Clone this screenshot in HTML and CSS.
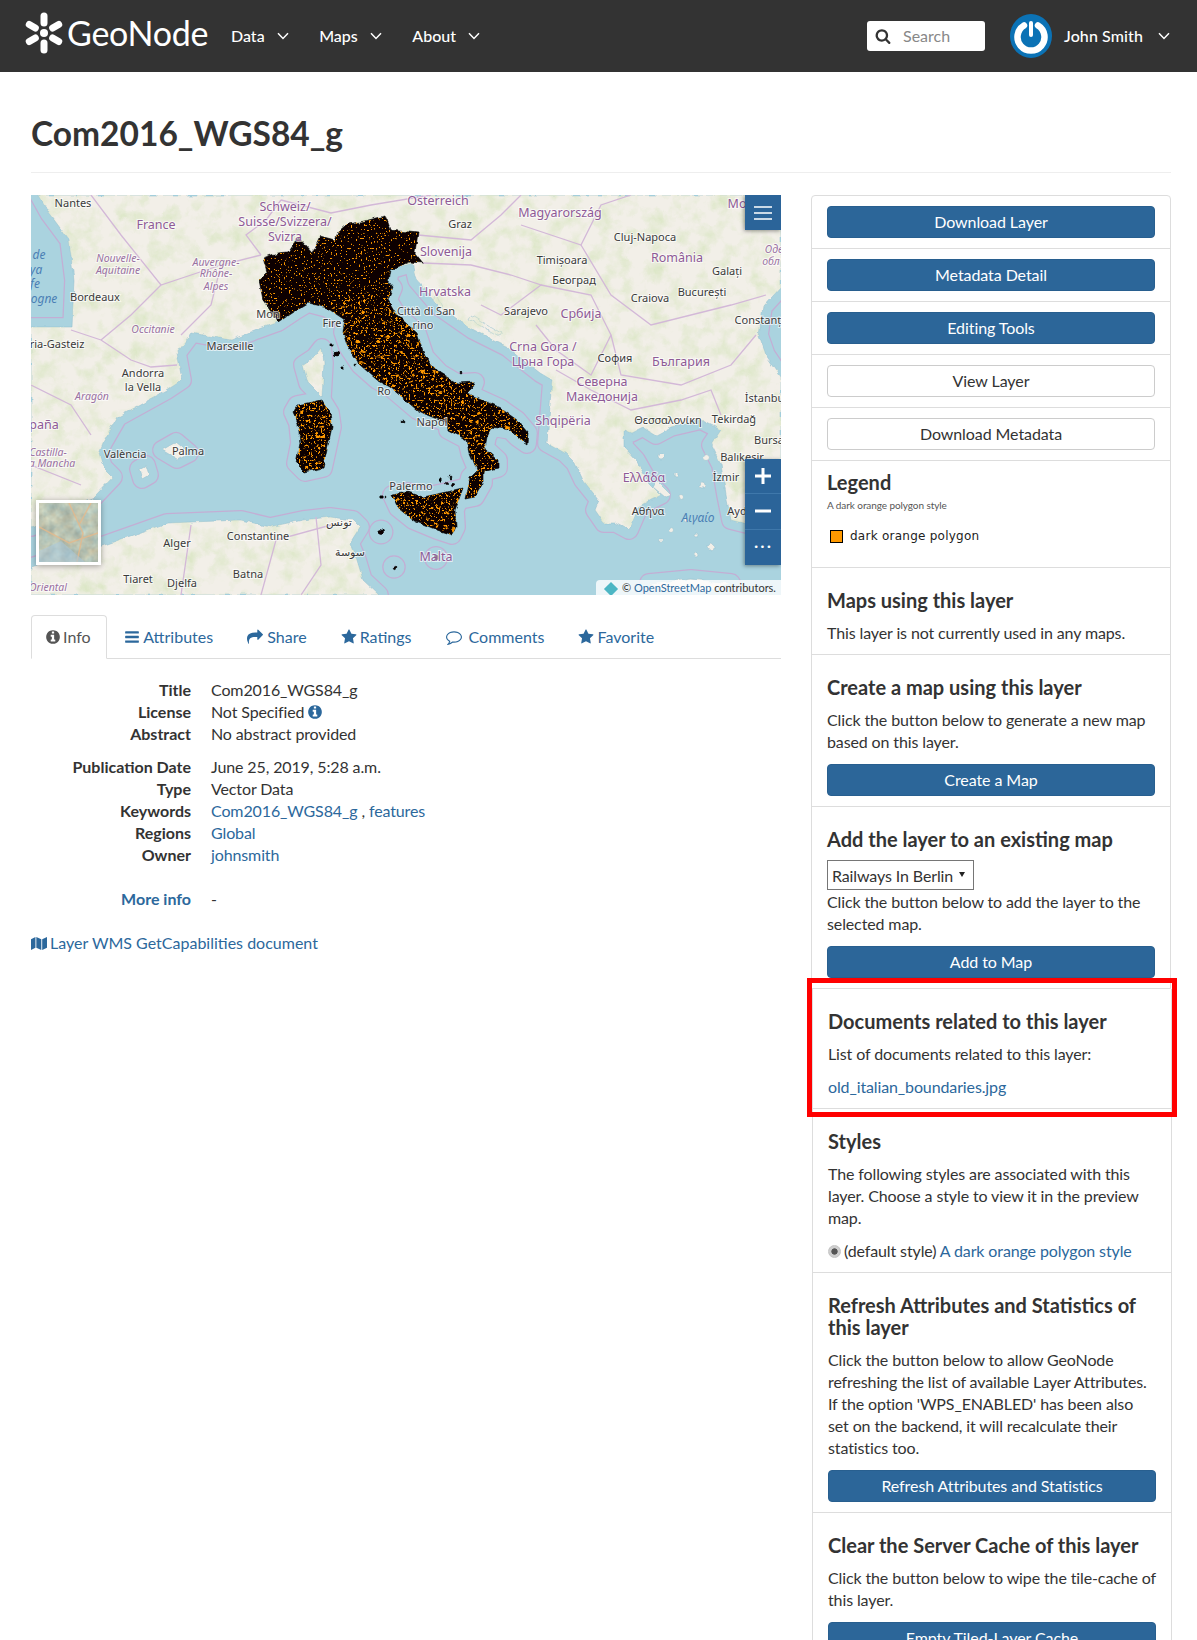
FILE: index.html
```html
<!DOCTYPE html>
<html lang="en">
<head>
<meta charset="utf-8">
<title>Com2016_WGS84_g</title>
<link rel="stylesheet" href="styles.css">
</head>
<body>
<svg class="defs" width="0" height="0" aria-hidden="true">
  <symbol id="i-star" viewBox="0 0 1792 1792"><path d="M1728 647q0 22-26 48l-363 354 86 500q1 7 1 20 0 21-10.5 35.5t-30.5 14.5q-19 0-40-12l-449-236-449 236q-22 12-40 12-21 0-31.5-14.5t-10.5-35.5q0-6 2-20l86-500-364-354q-25-27-25-48 0-37 56-46l502-73 225-455q19-41 49-41t49 41l225 455 502 73q56 9 56 46z"/></symbol>
  <symbol id="i-bars" viewBox="0 0 1792 1792"><path d="M1664 1344v128q0 26-19 45t-45 19h-1408q-26 0-45-19t-19-45v-128q0-26 19-45t45-19h1408q26 0 45 19t19 45zm0-512v128q0 26-19 45t-45 19h-1408q-26 0-45-19t-19-45v-128q0-26 19-45t45-19h1408q26 0 45 19t19 45zm0-512v128q0 26-19 45t-45 19h-1408q-26 0-45-19t-19-45v-128q0-26 19-45t45-19h1408q26 0 45 19t19 45z"/></symbol>
  <symbol id="i-info" viewBox="0 0 1792 1792"><path d="M1152 1376v-160q0-14-9-23t-23-9h-96v-512q0-14-9-23t-23-9h-320q-14 0-23 9t-9 23v160q0 14 9 23t23 9h96v320h-96q-14 0-23 9t-9 23v160q0 14 9 23t23 9h448q14 0 23-9t9-23zm-128-896v-160q0-14-9-23t-23-9h-192q-14 0-23 9t-9 23v160q0 14 9 23t23 9h192q14 0 23-9t9-23zm640 416q0 209-103 385.5t-279.5 279.5-385.5 103-385.5-103-279.5-279.5-103-385.5 103-385.5 279.5-279.5 385.5-103 385.5 103 279.5 279.5 103 385.5z"/></symbol>
  <symbol id="i-share" viewBox="0 0 1792 1792"><path d="M1792 640q0 26-19 45l-512 512q-19 19-45 19t-45-19-19-45v-256h-224q-98 0-175.5 6t-154 21.5-133 42.5-105.5 69.5-80 101-48.5 138.5-17.5 181q0 55 5 123 0 6 2.5 23.5t2.5 26.5q0 15-8.5 25t-23.5 10q-16 0-28-17-7-9-13-22t-13.5-30-10.5-24q-127-285-127-451 0-199 53-333 162-403 875-403h224v-256q0-26 19-45t45-19 45 19l512 512q19 19 19 45z"/></symbol>
  <symbol id="i-comment" viewBox="0 0 1792 1792"><path d="M896 384q-204 0-381.5 69.5t-282 187.5-104.5 255q0 112 71.5 213.5t201.5 175.5l87 50-27 96q-24 91-70 172 152-63 275-171l43-38 57 6q69 8 130 8 204 0 381.5-69.5t282-187.5 104.5-255-104.5-255-282-187.5-381.5-69.5zm896 512q0 174-120 321.5t-326 233-450 85.5q-70 0-145-8-198 175-460 242-49 14-114 22h-5q-15 0-27-10.5t-16-27.5v-1q-3-4-.5-12t2-10 4.5-9.5l6-9 7-8.5 8-9q7-8 31-34.5t34.5-38 31-39.5 32.5-51 27-59 26-76q-157-89-247.5-220t-90.5-281q0-174 120-321.5t326-233 450-85.5 450 85.5 326 233 120 321.5z"/></symbol>
  <symbol id="i-search" viewBox="0 0 1792 1792"><path d="M1216 832q0-185-131.5-316.5t-316.5-131.5-316.5 131.5-131.5 316.5 131.5 316.5 316.5 131.5 316.5-131.5 131.5-316.5zm512 832q0 52-38 90t-90 38q-54 0-90-38l-343-342q-179 124-399 124-143 0-273.5-55.5t-225-150-150-225-55.5-273.5 55.5-273.5 150-225 225-150 273.5-55.5 273.5 55.5 225 150 150 225 55.5 273.5q0 220-124 399l343 343q37 37 37 90z"/></symbol>
  <symbol id="i-map" viewBox="0 0 18 16"><path d="M0 3.2 5 .6v12.200L0 15.400zM6 .6l5.600 2.700v12.100L6 12.800zM12.600 3.300 18 .6v12.200l-5.400 2.600z"/></symbol>
  <symbol id="i-chev" viewBox="0 0 12 8"><path d="M1 1.200 6 6.400l5-5.200" fill="none" stroke="currentColor" stroke-width="1.500"/></symbol>
</svg>

<div class="page">
<header class="topbar">
  <a class="brand">
    <svg class="brand-mark" viewBox="0 0 40 42" aria-hidden="true">
      <circle cx="20" cy="21" r="4"/>
      <g>
        <rect x="16.500" y="0.500" width="7" height="14" rx="3.500"/>
        <rect x="16.500" y="27.500" width="7" height="14" rx="3.500"/>
        <rect x="16.500" y="0.500" width="7" height="14" rx="3.500" transform="rotate(60 20 21)"/>
        <rect x="16.500" y="0.500" width="7" height="14" rx="3.500" transform="rotate(120 20 21)"/>
        <rect x="16.500" y="0.500" width="7" height="14" rx="3.500" transform="rotate(240 20 21)"/>
        <rect x="16.500" y="0.500" width="7" height="14" rx="3.500" transform="rotate(300 20 21)"/>
      </g>
    </svg>
    <span class="brand-name">GeoNode</span>
  </a>
  <nav class="mainnav">
    <a class="navlink">Data <svg class="chev"><use href="#i-chev"/></svg></a>
    <a class="navlink">Maps <svg class="chev"><use href="#i-chev"/></svg></a>
    <a class="navlink">About <svg class="chev"><use href="#i-chev"/></svg></a>
  </nav>
  <div class="searchbox">
    <svg class="search-icon"><use href="#i-search"/></svg>
    <span class="search-text">Search</span>
  </div>
  <svg class="avatar" viewBox="0 0 42 44" aria-hidden="true">
    <ellipse cx="21" cy="22" rx="21" ry="22" fill="#0b72b5"/>
    <path d="M14 11.500a13.500 13.500 0 1 0 14 0" fill="none" stroke="#fff" stroke-width="6.500" stroke-linecap="round"/>
    <path d="M21 9v12" fill="none" stroke="#fff" stroke-width="4" stroke-linecap="round"/>
  </svg>
  <a class="usermenu">John Smith <svg class="chev"><use href="#i-chev"/></svg></a>
</header>

<main class="content">
  <h1 class="title">Com2016_WGS84_g</h1>
  <div class="columns">
    <section class="leftcol">
      <div class="mapview">
        <svg class="mapsvg" viewBox="0 0 750 400" width="750" height="400">
          <defs>
            <path id="europe" d="M0 132L41 132L43 85L38 45L18 18L8 0L750 0L750 92L732 112L728 140L735 160L750 182L750 320L720 330L700 325L695 300L690 270L680 250L690 235L670 225L640 232L625 240L612 232L600 238L593 235L593 252L605 265L618 288L630 300L620 305L608 312L598 335L585 328L573 328L564 315L568 305L552 285L544 268L534 258L516 248L519 210L521 185L509 178L476 152L442 135L409 112L386 85L382 68L359 75L340 90L290 90L262 117L247 127L225 135L200 145L161 138L146 158L151 185L136 195L87 222L72 248L68 258L72 272L82 282L63 302L38 312L9 328L0 332Z"/>
            <path id="africa" d="M0 372L68 352L136 328L210 325L239 332L272 325L299 322L322 325L329 332L319 348L326 365L332 385L348 400L0 400Z"/>
            <path id="corsica" d="M291 153L293 168L291 202L277 188L272 170L284 162Z"/>
            <path id="mallorca" d="M131 255L145 247L158 258L146 264Z"/>
            <path id="ibiza" d="M108 274L115 270L118 280L111 284Z"/>
            <path id="crete" d="M618 388L660 384L700 388L680 396L630 396Z"/>
            <path id="peninsula" d="M247 127L232 105L228 85L236 77L232 63L246 58L257 57L267 42L281 58L289 41L304 45L307 37L316 29L329 27L354 21L359 35L387 38L384 58L392 68L379 67L359 75L357 87L362 93L357 105L366 120L386 138L394 162L409 178L426 188L444 187L442 192L436 198L469 213L486 225L497 238L496 249L486 242L479 235L461 232L456 242L454 253L467 265L467 273L452 277L452 288L444 302L434 304L439 282L446 275L439 258L436 245L417 235L416 228L396 220L386 215L366 198L359 192L346 185L329 170L317 152L312 137L314 125L296 113L277 108L262 117Z"/>
            <path id="sicily" d="M361 300L377 297L392 302L416 297L432 293L424 315L425 332L421 340L406 335L382 325L367 313Z"/>
            <path id="sardinia" d="M291 205L299 218L301 232L296 255L292 273L274 277L265 268L269 248L267 228L262 217L266 210Z"/>
            <g id="isles">
              <circle cx="350" cy="337" r="2.500"/><circle cx="363" cy="372" r="1.800"/><circle cx="405" cy="363" r="2"/>
            </g>
            <g id="minor">
              <circle cx="306" cy="159" r="3"/><circle cx="300" cy="150" r="1.200"/><circle cx="311" cy="172" r="1.200"/><circle cx="325" cy="170" r="1"/>
              <circle cx="350" cy="302" r="1.300"/><circle cx="354" cy="302" r="1"/><circle cx="409" cy="285" r="1.300"/><circle cx="416" cy="288" r="1.500"/><circle cx="421" cy="290" r="1.800"/><circle cx="419" cy="282" r="1"/><circle cx="372" cy="226" r="1"/><circle cx="430" cy="178" r="1"/>
            </g>
            <g id="aegean">
              <circle cx="630" cy="262" r="3"/><circle cx="645" cy="280" r="2"/><circle cx="650" cy="302" r="2.500"/><circle cx="665" cy="340" r="2"/><circle cx="680" cy="352" r="3"/><circle cx="655" cy="325" r="2"/><circle cx="640" cy="335" r="2.500"/><circle cx="675" cy="262" r="3.500"/><circle cx="672" cy="290" r="3"/><circle cx="630" cy="345" r="1.500"/><circle cx="665" cy="360" r="2"/>
              <path d="M625 285L640 300L634 302L622 292Z"/>
              <path d="M440 120L470 138L468 141L438 124Z"/><path d="M405 100L415 118L411 118L402 104Z"/>
            </g>
            <clipPath id="landclip"><use href="#europe"/><use href="#africa"/><use href="#corsica"/></clipPath>
            <clipPath id="italyclip"><use href="#peninsula"/><use href="#sicily"/><use href="#sardinia"/></clipPath>
            <filter id="rough" x="-5%" y="-5%" width="110%" height="110%">
              <feTurbulence type="fractalNoise" baseFrequency="0.12" numOctaves="2" seed="5" result="n"/>
              <feDisplacementMap in="SourceGraphic" in2="n" scale="5" xChannelSelector="R" yChannelSelector="G"/>
            </filter>
            <filter id="greens" x="0" y="0" width="100%" height="100%" color-interpolation-filters="sRGB">
              <feTurbulence type="fractalNoise" baseFrequency="0.06" numOctaves="4" seed="7"/>
              <feColorMatrix values="0 0 0 0 .85  0 0 0 0 .90  0 0 0 0 .76  0 0 0 1.800 -.75"/>
            </filter>
            <filter id="speck-fine" x="0" y="0" width="100%" height="100%" color-interpolation-filters="sRGB">
              <feTurbulence type="fractalNoise" baseFrequency="0.6" numOctaves="1" seed="3"/>
              <feColorMatrix values="0 0 0 0 1  0 0 0 0 .6  0 0 0 0 0  0 0 0 16 -10.100"/>
            </filter>
            <filter id="speck-mid" x="0" y="0" width="100%" height="100%" color-interpolation-filters="sRGB">
              <feTurbulence type="fractalNoise" baseFrequency="0.4" numOctaves="1" seed="9"/>
              <feColorMatrix values="0 0 0 0 1  0 0 0 0 .6  0 0 0 0 0  0 0 0 16 -9.900"/>
            </filter>
            <filter id="speck-large" x="0" y="0" width="100%" height="100%" color-interpolation-filters="sRGB">
              <feTurbulence type="fractalNoise" baseFrequency="0.2" numOctaves="1" seed="14"/>
              <feColorMatrix values="0 0 0 0 1  0 0 0 0 .6  0 0 0 0 0  0 0 0 16 -10.700"/>
            </filter>
            <filter id="thumbnoise" x="0" y="0" width="100%" height="100%" color-interpolation-filters="sRGB">
              <feTurbulence type="fractalNoise" baseFrequency="0.09" numOctaves="3" seed="11"/>
              <feColorMatrix values=".30 .10 0 0 .52  .20 .20 0 0 .56  .10 .25 0 0 .52  0 0 0 0 1"/>
            </filter>
          </defs>
          <rect class="sea" width="750" height="400"/>
          <g class="outline-outer">
            <use href="#europe"/><use href="#africa"/><use href="#corsica"/><use href="#mallorca"/><use href="#ibiza"/><use href="#crete"/><use href="#peninsula"/><use href="#sicily"/><use href="#sardinia"/><use href="#isles"/>
          </g>
          <g class="outline-inner">
            <use href="#europe"/><use href="#africa"/><use href="#corsica"/><use href="#mallorca"/><use href="#ibiza"/><use href="#crete"/><use href="#peninsula"/><use href="#sicily"/><use href="#sardinia"/><use href="#isles"/>
          </g>
          <g filter="url(#rough)">
            <g class="land">
              <use href="#europe"/><use href="#africa"/><use href="#corsica"/><use href="#mallorca"/><use href="#ibiza"/><use href="#crete"/><use href="#aegean"/>
            </g>
            <rect class="greenery" width="750" height="400" filter="url(#greens)" clip-path="url(#landclip)"/>
          </g>
          <g class="borders">
            <polyline points="40,135 70,145 100,165 120,172 146,170"/>
            <polyline points="230,60 215,40 235,25 250,5"/>
            <polyline points="250,5 300,18 340,10 400,0"/>
            <polyline points="387,40 440,45 470,20 490,0"/>
            <polyline points="490,30 550,50 570,10 600,0"/>
            <polyline points="550,50 580,100 620,130 700,110 735,100"/>
            <polyline points="392,68 440,70 480,80 510,90 470,120 450,110"/>
            <polyline points="510,90 560,100 580,140 560,180 525,155 505,130"/>
            <polyline points="580,140 590,180 650,190 700,170 725,140"/>
            <polyline points="525,175 560,195 600,215 650,205 680,195 690,220"/>
            <polyline points="60,0 90,40 130,90 190,70 230,60"/>
            <polyline points="0,190 40,210 60,240"/>
            <polyline points="160,330 150,400"/>
            <polyline points="285,322 290,370 270,400"/>
            <polyline points="130,90 100,120 70,145"/>
            <polyline points="190,70 180,110 150,140"/>
            <polyline points="300,330 245,345 230,400"/>
            <polyline points="0,270 50,290"/>
          </g>
          <g class="italy" filter="url(#rough)">
            <use href="#peninsula"/><use href="#sicily"/><use href="#sardinia"/><use href="#isles"/><use href="#minor"/>
          </g>
          <g clip-path="url(#italyclip)">
            <rect x="220" y="0" width="290" height="345" filter="url(#speck-fine)"/>
            <rect x="300" y="100" width="210" height="210" filter="url(#speck-mid)"/>
            <rect x="310" y="110" width="110" height="90" filter="url(#speck-large)"/>
            <rect x="430" y="205" width="60" height="45" filter="url(#speck-large)"/>
            <rect x="255" y="200" width="55" height="80" filter="url(#speck-mid)"/>
            <rect x="255" y="200" width="55" height="80" filter="url(#speck-large)"/>
            <rect x="355" y="290" width="80" height="55" filter="url(#speck-mid)"/>
            <rect x="355" y="290" width="80" height="55" filter="url(#speck-large)"/>
          </g>
          <g class="m-city">
            <text x="42" y="12">Nantes</text><text x="429" y="33">Graz</text><text x="614" y="46">Cluj-Napoca</text>
            <text x="531" y="69">Timișoara</text><text x="696" y="80">Galați</text><text x="64" y="106">Bordeaux</text>
            <text x="199" y="155">Marseille</text><text x="237" y="123">Mon</text><text x="301" y="132">Fire</text>
            <text x="395" y="120">Città di San</text><text x="392" y="134">rino</text><text x="495" y="120">Sarajevo</text>
            <text x="543" y="89">Београд</text><text x="619" y="107">Craiova</text><text x="671" y="101">București</text>
            <text x="730" y="129">Constanța</text><text x="26" y="153">ria-Gasteiz</text><text x="584" y="167">София</text>
            <text x="112" y="182">Andorra</text><text x="112" y="196">la Vella</text><text x="353" y="200">Ro</text>
            <text x="735" y="207">İstanbul</text><text x="401" y="231">Napol</text><text x="637" y="229">Θεσσαλονίκη</text>
            <text x="703" y="228">Tekirdağ</text><text x="738" y="249">Bursa</text><text x="711" y="266">Balıkesir</text>
            <text x="94" y="263">València</text><text x="157" y="260">Palma</text><text x="380" y="295">Palermo</text>
            <text x="695" y="286">İzmir</text><text x="617" y="320">Αθήνα</text><text x="706" y="320">Ayd</text>
            <text x="146" y="352">Alger</text><text x="227" y="345">Constantine</text><text x="308" y="331">تونس</text>
            <text x="319" y="361">سوسة</text><text x="107" y="388">Tiaret</text><text x="151" y="392">Djelfa</text><text x="217" y="383">Batna</text>
          </g>
          <g class="m-country">
            <text x="125" y="34">France</text><text x="254" y="16">Schweiz/</text><text x="254" y="31">Suisse/Svizzera/</text><text x="254" y="46">Svizra</text>
            <text x="407" y="10">Österreich</text><text x="529" y="22">Magyarország</text><text x="706" y="13">Mo</text><text x="415" y="61">Slovenija</text>
            <text x="646" y="67">România</text><text x="414" y="101">Hrvatska</text><text x="550" y="123">Србија</text><text x="512" y="156">Crna Gora /</text>
            <text x="512" y="171">Црна Гора</text><text x="650" y="171">България</text><text x="571" y="191">Северна</text><text x="571" y="206">Македонија</text>
            <text x="13" y="234">paña</text><text x="532" y="230">Shqipëria</text><text x="613" y="287">Ελλάδα</text><text x="405" y="366">Malta</text>
          </g>
          <g class="m-region">
            <text x="87" y="67">Nouvelle-</text><text x="87" y="79">Aquitaine</text><text x="185" y="71">Auvergne-</text><text x="185" y="82">Rhône-</text><text x="185" y="95">Alpes</text>
            <text x="122" y="138">Occitanie</text><text x="61" y="205">Aragón</text><text x="17" y="261">Castilla-</text><text x="21" y="272">a Mancha</text><text x="17" y="396">Oriental</text>
            <text x="743" y="58">Оде</text><text x="740" y="70">обл</text>
          </g>
          <g class="m-water">
            <text x="8" y="64">de</text><text x="5" y="79">ya</text><text x="4" y="93">fe</text><text x="13" y="108">ogne</text><text x="667" y="327">Αιγαίο</text>
          </g>
        </svg>
        <button class="mapbtn mapbtn-menu" aria-label="Menu"><svg viewBox="0 0 18 14"><path d="M0 1h18M0 7h18M0 13h18"/></svg></button>
        <div class="zoomstack">
          <button class="mapbtn" aria-label="Zoom in"><svg viewBox="0 0 18 18"><path d="M9 1v16M1 9h16"/></svg></button>
          <button class="mapbtn" aria-label="Zoom out"><svg viewBox="0 0 18 18"><path d="M1 9h16"/></svg></button>
          <button class="mapbtn mapbtn-dots" aria-label="More">•••</button>
        </div>
        <div class="basemap-thumb">
          <svg class="thumb-image" viewBox="0 0 59 59" aria-hidden="true">
            <rect width="59" height="59" filter="url(#thumbnoise)"/>
            <path class="thumb-road" d="M30 0L44 30L38 59M52 0L40 22M0 24L30 40L59 30"/>
            <path class="thumb-water" d="M0 48L22 38L46 59L0 59Z"/>
          </svg>
        </div>
        <div class="attribution"><span class="attr-logo"></span><span>© <a>OpenStreetMap</a> contributors.</span></div>
      </div>

      <ul class="tabs">
        <li class="tab tab-active"><svg class="ico ico-info"><use href="#i-info"/></svg> Info</li>
        <li class="tab"><svg class="ico ico-bars"><use href="#i-bars"/></svg> Attributes</li>
        <li class="tab"><svg class="ico"><use href="#i-share"/></svg> Share</li>
        <li class="tab"><svg class="ico ico-star"><use href="#i-star"/></svg> Ratings</li>
        <li class="tab"><svg class="ico ico-comment"><use href="#i-comment"/></svg> Comments</li>
        <li class="tab"><svg class="ico ico-star"><use href="#i-star"/></svg> Favorite</li>
      </ul>

      <dl class="facts">
        <dt>Title</dt><dd>Com2016_WGS84_g</dd>
        <dt>License</dt><dd>Not Specified <svg class="ico ico-link"><use href="#i-info"/></svg></dd>
        <dt>Abstract</dt><dd>No abstract provided</dd>
      </dl>
      <dl class="facts facts-second">
        <dt>Publication Date</dt><dd>June 25, 2019, 5:28 a.m.</dd>
        <dt>Type</dt><dd>Vector Data</dd>
        <dt>Keywords</dt><dd><a>Com2016_WGS84_g</a> , <a>features</a></dd>
        <dt>Regions</dt><dd><a>Global</a></dd>
        <dt>Owner</dt><dd><a>johnsmith</a></dd>
      </dl>
      <dl class="facts facts-more">
        <dt><a>More info</a></dt><dd>-</dd>
      </dl>
      <p class="wms"><a><svg class="ico ico-map"><use href="#i-map"/></svg> Layer WMS GetCapabilities document</a></p>
    </section>

    <aside class="rightcol">
      <div class="panel panel-top">
        <div class="row row-btn"><a class="btn">Download Layer</a></div>
        <div class="row row-btn"><a class="btn">Metadata Detail</a></div>
        <div class="row row-btn"><a class="btn">Editing Tools</a></div>
        <div class="row row-btn"><a class="btn btn-plain">View Layer</a></div>
        <div class="row row-btn"><a class="btn btn-plain">Download Metadata</a></div>
        <div class="row row-legend">
          <h4 class="legend-title">Legend</h4>
          <p class="legend-sub">A dark orange polygon style</p>
          <p class="legend-item"><span class="swatch"></span>dark orange polygon</p>
        </div>
        <div class="row">
          <h4>Maps using this layer</h4>
          <p>This layer is not currently used in any maps.</p>
        </div>
        <div class="row">
          <h4>Create a map using this layer</h4>
          <p>Click the button below to generate a new map based on this layer.</p>
          <a class="btn btn-spaced">Create a Map</a>
        </div>
        <div class="row">
          <h4 class="addmap-title">Add the layer to an existing map</h4>
          <div class="selectwrap"><select class="mapselect"><option>Railways In Berlin</option></select></div>
          <p>Click the button below to add the layer to the selected map.</p>
          <a class="btn btn-spaced">Add to Map</a>
        </div>
      </div>
      <div class="panel panel-bottom">
        <div class="row row-docs">
          <h4>Documents related to this layer</h4>
          <p>List of documents related to this layer:</p>
          <p class="doc-link"><a>old_italian_boundaries.jpg</a></p>
        </div>
        <div class="row">
          <h4>Styles</h4>
          <p>The following styles are associated with this layer. Choose a style to view it in the preview map.</p>
          <p class="style-line"><input class="style-radio" type="radio" checked disabled> (default style) <a>A dark orange polygon style</a></p>
        </div>
        <div class="row">
          <h4>Refresh Attributes and Statistics of this layer</h4>
          <p>Click the button below to allow GeoNode refreshing the list of available Layer Attributes. If the option 'WPS_ENABLED' has been also set on the backend, it will recalculate their statistics too.</p>
          <a class="btn btn-spaced">Refresh Attributes and Statistics</a>
        </div>
        <div class="row">
          <h4>Clear the Server Cache of this layer</h4>
          <p class="p-wide">Click the button below to wipe the tile-cache of this layer.</p>
          <a class="btn btn-spaced">Empty Tiled-Layer Cache</a>
        </div>
      </div>
    </aside>
  </div>
</main>
</div>
</body>
</html>
```
FILE: styles.css
```css
* { box-sizing: border-box; }
html, body { margin: 0; padding: 0; }
body { font-family: Lato, "Noto Sans", sans-serif; font-size: 16px; line-height: 22px; color: #333; background: #fff; }
a { color: #2c689c; text-decoration: none; }
.defs { position: absolute; }
.page { height: 1640px; overflow: hidden; }

.topbar { height: 72px; background: #333; color: #fff; display: flex; align-items: center; padding-left: 24px; }
.brand { display: flex; align-items: center; color: #fff; width: 207px; }
.brand-mark { width: 40px; height: 42px; fill: #fff; margin-top: -6px; flex: none; }
.brand-name { font-size: 34px; line-height: 40px; margin-left: 3px; margin-top: -6px; letter-spacing: -0.25px; }
.mainnav { display: flex; gap: 30.500px; }
.navlink { color: #fff; display: flex; align-items: center; gap: 12px; font-weight: 500; }
.chev { width: 12px; height: 8px; color: #fff; }
.searchbox { margin-left: auto; width: 118px; height: 30px; background: #fff; border-radius: 3px; display: flex; align-items: center; padding-left: 8px; }
.search-icon { width: 16px; height: 16px; fill: #333; }
.search-text { margin-left: 12px; color: #888; }
.avatar { width: 42px; height: 44px; margin-left: 25px; flex: none; }
.usermenu { color: #fff; display: flex; align-items: center; gap: 15px; margin-left: 12px; margin-right: 27px; white-space: nowrap; font-weight: 500; letter-spacing: .1px; }

.content { padding: 0 26px 0 31px; }
.title { margin: 0 0 22px; padding: 41px 0 19px; font-size: 33.500px; line-height: 40px; font-weight: 700; color: #333; border-bottom: 1px solid #eee; }
.columns { display: flex; gap: 30px; align-items: flex-start; }
.leftcol { width: 750px; flex: none; }
.rightcol { width: 360px; flex: none; }

.mapview { position: relative; width: 750px; height: 400px; overflow: hidden; background: #aad3df; }
.mapsvg { display: block; }
.sea { fill: #aad3df; }
.outline-outer use { fill: #c3aed4; stroke: #c3aed4; stroke-width: 20px; stroke-linejoin: round; }
.outline-inner use { fill: #aad3df; stroke: #aad3df; stroke-width: 17.500px; stroke-linejoin: round; }
.land use { fill: #f2efe8; stroke: #8fbccd; stroke-width: .5px; }
.greenery { fill: #000; }
.borders polyline { fill: none; stroke: #d3b8d8; stroke-width: 1.300px; }
.italy use { fill: #0a0500; stroke: #000; stroke-width: .6px; }
.mapsvg text { font-family: "Noto Sans", "DejaVu Sans", sans-serif; text-anchor: middle; paint-order: stroke; stroke: rgba(255,255,255,.65); stroke-width: 2px; }
.m-city text { font-size: 11px; fill: #3a3a3a; }
.m-country text { font-size: 12.500px; fill: #8e5a96; }
.m-region text { font-size: 10.500px; font-style: italic; fill: #9a72a2; }
.m-water text { font-size: 12px; font-style: italic; fill: #4a7fb5; stroke: none; }

.mapbtn { display: flex; align-items: center; justify-content: center; width: 36px; height: 35.300px; padding: 0; border: 0; background: #2b6499; color: #fff; border-bottom: 1px solid #3f78ab; }
.mapbtn svg { fill: none; stroke: #fff; stroke-width: 2.200px; }
.mapbtn-menu { position: absolute; top: 0; right: 0; box-shadow: -1px 1px 4px rgba(0,0,0,.4); border: 0; }
.mapbtn-menu svg { width: 18px; height: 14px; stroke-width: 1.600px; }
.zoomstack { position: absolute; top: 264px; right: 0; display: flex; flex-direction: column; box-shadow: -1px 1px 4px rgba(0,0,0,.4); }
.zoomstack svg { width: 18px; height: 18px; stroke-width: 3px; }
.mapbtn-dots { font-size: 9px; letter-spacing: 1px; border: 0; font-family: "DejaVu Sans", sans-serif; }
.basemap-thumb { position: absolute; left: 5px; top: 305px; width: 65px; height: 65px; padding: 3px; background: #fff; box-shadow: 0 1px 6px rgba(0,0,0,.35); }
.thumb-image { display: block; width: 59px; height: 59px; }
.thumb-road { fill: none; stroke: #e3b98c; stroke-width: 1.500px; opacity: .8; }
.thumb-water { fill: #a9c8dc; opacity: .55; }
.attribution { position: absolute; right: 0; bottom: 0; height: 15px; width: 185px; padding-left: 8px; background: rgba(255,255,255,.8); border-top-left-radius: 4px; font-size: 11px; line-height: 15px; color: #333; white-space: nowrap; display: flex; align-items: center; gap: 6px; }
.attr-logo { width: 10px; height: 10px; background: #4db6c4; transform: rotate(45deg); margin: 3px 0 0 2px; flex: none; }

.tabs { list-style: none; margin: 20px 0 0; padding: 0; display: flex; gap: 2px; border-bottom: 1px solid #ddd; height: 44px; }
.tab { height: 44px; padding: 10px 15px; border: 1px solid transparent; color: #2c689c; white-space: nowrap; }
.tab-active { color: #555; background: #fff; border-color: #ddd #ddd #fff; border-radius: 4px 4px 0 0; }
.ico { width: 16px; height: 16px; fill: currentColor; vertical-align: -2px; }
.ico-info { margin: 0 -2px 0 -2px; }
.ico-bars { margin-left: -1px; }
.ico-star { margin-right: -1px; }
.ico-comment { margin-right: 3px; }
.ico-link { color: #2c689c; margin-left: -1px; }
.ico-map { width: 16px; height: 15px; margin-right: -1px; }

.facts { display: grid; grid-template-columns: 160px 1fr; column-gap: 20px; margin: 20px 0 0; }
.facts dt { font-weight: 700; text-align: right; }
.facts dd { margin: 0; letter-spacing: -0.12px; }
.facts-second { margin-top: 11px; }
.facts-more { margin-top: 22px; }
.wms { margin: 22px 0 0; }

.panel { width: 360px; border: 1px solid #ddd; border-top: 0; background: #fff; }
.panel-top { border-top: 1px solid #ddd; border-radius: 4px 4px 0 0; height: 794px; }
.panel-bottom { margin-left: 1px; }
.row { padding: 10px 15px; border-bottom: 1px solid #ddd; position: relative; }
.row h4 { margin: 11px 0; font-size: 20px; line-height: 22px; font-weight: 700; color: #333; }
.row p { margin: 0; letter-spacing: -0.12px; }
.row .p-wide { margin-right: -3px; }
.row-btn { height: 53px; }
.btn { display: block; height: 32px; line-height: 30px; text-align: center; background: #2c6699; border: 1px solid #285f8f; border-radius: 4px; color: #fff; letter-spacing: -0.08px; }
.btn-plain { background: #fff; color: #333; border-color: #ccc; }
.btn-spaced { margin-top: 11px; }
.row-legend { height: 107px; }
.row .legend-title { margin: 0 0 6px; }
.row .legend-sub { font-size: 10px; line-height: 12px; color: #555; letter-spacing: -0.08px; }
.row .legend-item { margin: 18px 0 0 3px; display: flex; align-items: center; gap: 7px; font-family: "DejaVu Sans", sans-serif; font-size: 12px; line-height: 15px; letter-spacing: .25px; color: #222; }
.swatch { width: 13px; height: 13px; background: #f90; border: 1px solid #000; flex: none; }
.row .addmap-title { margin-bottom: 10px; }
.selectwrap { position: relative; width: 147px; margin-bottom: 1px; }
.selectwrap::after { content: ""; position: absolute; right: 9px; top: 12px; border: 3.500px solid transparent; border-top: 5px solid #222; border-bottom: 0; pointer-events: none; }
.mapselect { display: block; width: 147px; height: 30px; font-family: Lato, sans-serif; font-size: 16px; letter-spacing: -0.12px; background: #fff; color: #333; border: 1px solid #767676; border-radius: 0; padding: 0 0 0 4px; appearance: none; -webkit-appearance: none; }
.row .doc-link { margin-top: 11px; }
.row .style-line { margin-top: 11px; }
.style-radio { appearance: none; -webkit-appearance: none; margin: 0 -1px 0 0; width: 13px; height: 13px; vertical-align: -1px; border-radius: 50%; border: 1px solid #c4c4c4; background: radial-gradient(circle, #555 0 2.800px, #cfcfcf 3.500px); }
.row-docs::after { content: ""; position: absolute; left: -6px; right: -6px; top: -11px; bottom: -9px; border: 5px solid #f00; pointer-events: none; }
```
